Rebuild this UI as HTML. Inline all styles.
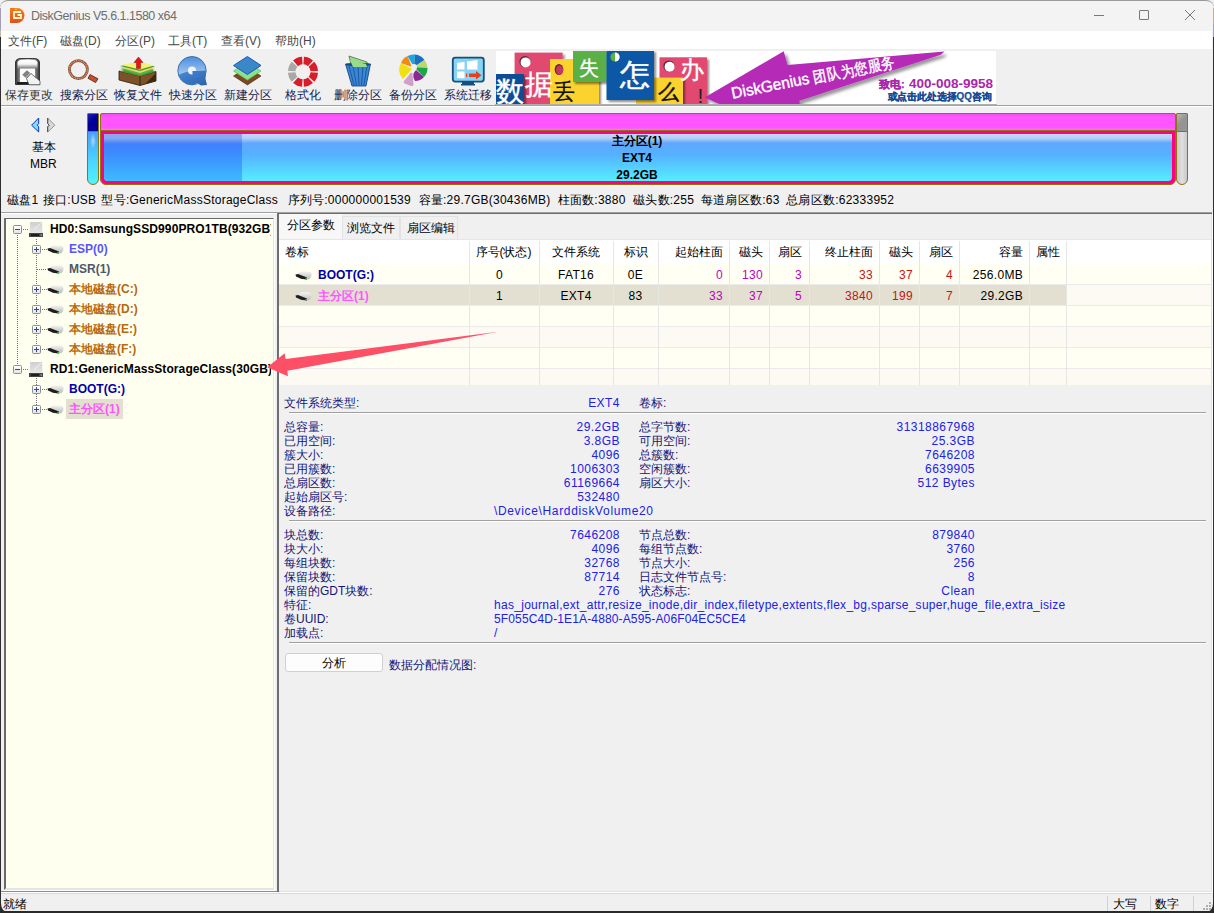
<!DOCTYPE html>
<html><head><meta charset="utf-8">
<style>
*{margin:0;padding:0;box-sizing:border-box}
html,body{width:1214px;height:913px;overflow:hidden;background:#f0f0f0;font-family:"Liberation Sans",sans-serif;font-size:12px;color:#000;position:relative}
.a{position:absolute;white-space:nowrap;line-height:14px}
.ab{position:absolute}
svg{position:absolute;overflow:visible}
</style></head><body>
<!-- window frame -->
<div class="ab" style="left:0;top:0;width:1214px;height:913px;background:#f0f0f0"></div>
<!-- title bar -->
<div class="ab" style="left:0;top:0;width:1214px;height:31px;background:#f3f3f3;border-top:1px solid #9a9a9a;border-radius:8px 8px 0 0"></div>
<svg style="left:10px;top:7px" width="15" height="16" viewBox="0 0 15 16">
<defs><linearGradient id="lg" x1="0" y1="0" x2="0" y2="1"><stop offset="0" stop-color="#f77b1a"/><stop offset="1" stop-color="#e2501a"/></linearGradient></defs>
<path d="M0 1 H7 A7.5 7.5 0 0 1 7 16 H0 Z" fill="url(#lg)"/>
<path d="M11 5 H4 V11 H11 V8 H7.5" fill="none" stroke="#fff6c8" stroke-width="1.8"/>
<circle cx="6" cy="2.3" r="0.9" fill="#ffd23a"/>
</svg>
<div class="a" id="title" style="left:31px;top:9px;color:#6e6e6e;font-size:12.5px;letter-spacing:-0.5px">DiskGenius V5.6.1.1580 x64</div>
<!-- window controls -->
<div class="ab" style="left:1094px;top:15px;width:10px;height:1px;background:#777"></div>
<div class="ab" style="left:1139px;top:10px;width:10px;height:10px;border:1px solid #777;border-radius:1px"></div>
<svg style="left:1185px;top:10px" width="10" height="10"><path d="M0 0 L10 10 M10 0 L0 10" stroke="#777" stroke-width="1"/></svg>
<!-- menu bar -->
<div class="ab" style="left:1px;top:31px;width:1211px;height:18px;background:#fff"></div>
<div class="a" style="left:8px;top:34px;color:#484848">文件(F)</div>
<div class="a" style="left:60px;top:34px;color:#484848">磁盘(D)</div>
<div class="a" style="left:115px;top:34px;color:#484848">分区(P)</div>
<div class="a" style="left:168px;top:34px;color:#484848">工具(T)</div>
<div class="a" style="left:221px;top:34px;color:#484848">查看(V)</div>
<div class="a" style="left:275px;top:34px;color:#484848">帮助(H)</div>

<!-- toolbar -->

<svg style="left:0;top:0" width="500" height="100" viewBox="0 0 500 100">
<defs>
<linearGradient id="svh" x1="0" y1="0" x2="1" y2="0"><stop offset="0" stop-color="#333"/><stop offset="0.18" stop-color="#8a8a8a"/><stop offset="0.5" stop-color="#d0d0d0"/><stop offset="0.82" stop-color="#8a8a8a"/><stop offset="1" stop-color="#333"/></linearGradient>
<linearGradient id="svt" x1="0" y1="0" x2="0" y2="1"><stop offset="0" stop-color="#fff"/><stop offset="0.45" stop-color="#f4f4f4"/><stop offset="1" stop-color="#6a6a6a"/></linearGradient>
<linearGradient id="qtop" x1="0" y1="0" x2="0" y2="1"><stop offset="0" stop-color="#4a8ee0"/><stop offset="0.75" stop-color="#b4d0f0"/><stop offset="1" stop-color="#dce8f6"/></linearGradient>
<linearGradient id="qbot" x1="0" y1="0" x2="1" y2="1"><stop offset="0" stop-color="#4a8ad8"/><stop offset="1" stop-color="#2a62a8"/></linearGradient>
</defs>
<!-- save -->
<g transform="translate(15,58)">
<path d="M0.5 4 Q1 0.8 5 0.5 H20 Q24 0.8 24.5 4 V26.5 H0.5 Z" fill="url(#svh)" stroke="#2a2a2a" stroke-width="0.9"/>
<path d="M2.5 4.5 Q3 2 6 2 H19 Q22 2 22.5 4.5 V11 H2.5 Z" fill="url(#svt)"/>
<rect x="5" y="10.5" width="15" height="13.5" fill="#fbfbfb"/>
<rect x="2" y="24" width="21" height="2.3" fill="#1e1e1e"/>
<path d="M7.3 16.8 L11.8 12.2 L15 14.7 L10.5 19.7 Z" fill="#808080"/>
<path d="M10.5 19.7 L15 14.7 L16 15.5 L11.5 20.6 Z" fill="#a8a8a8"/>
<path d="M11.5 20.6 L16 15.5 L25 23 L25 26.8 L14 26.8 Z" fill="#f2f2f2" stroke="#3a3a3a" stroke-width="0.7"/>
</g>
<!-- magnifier -->
<circle cx="78.4" cy="69.6" r="9" fill="none" stroke="#6a4a3a" stroke-width="2.8"/>
<circle cx="78.4" cy="69.6" r="9" fill="none" stroke="#ec8a5a" stroke-width="1.8" stroke-dasharray="1.2 0.6"/>
<path d="M90 74.5 L98 78.8 L95.6 82.6 L88 78.3 Z" fill="#c4502e" stroke="#5a1e10" stroke-width="0.8"/>
<!-- recover -->
<path d="M119 71 L140 76 L156 71.5 L156 81 L140 85.5 L119 80 Z" fill="#7d5228" stroke="#2a1808" stroke-width="0.8"/>
<path d="M140 76 L140 85.5" stroke="#2a1808" stroke-width="0.8"/>
<path d="M145 84 L156 73 L156 81 Z" fill="#3e2810"/>
<path d="M119.5 71.2 L139 66.5 L156 71.5 L140 76.3 Z" fill="#3e9a3a"/>
<path d="M120 69 L139 65 L155 70 L140 75 Z" fill="#5ab04a"/>
<path d="M120 67.5 L139 64 L155 68 L140 73 Z" fill="#e8d860"/>
<path d="M120 66 L139 62 L155 66.5 L140 71 Z" fill="#4a9a3a"/>
<path d="M121 65 L139 61.5 L154 65.5 L140 69.5 Z" fill="#f5f07a"/>
<path d="M136.5 68.5 L136.5 62.5 L134 62.5 L138.5 57 L143 62.5 L140.5 62.5 L140.5 68.5 Z" fill="#e8141a" stroke="#8a0a0a" stroke-width="0.5"/>
<!-- quick Q -->
<circle cx="192" cy="70.7" r="14.2" fill="url(#qtop)" stroke="#2a5a98" stroke-width="0.8"/>
<path d="M178.3 75 Q186 71 192 71.5 L206 70.5 L205.5 79 L207 85 L201 85.5 L197 83 Q194 85 192 85 A14.2 14.2 0 0 1 178.3 75 Z" fill="url(#qbot)"/>
<circle cx="192" cy="70.5" r="4" fill="#f0f4f8"/>
<rect x="192.5" y="71" width="6" height="6" fill="#3a7ac8"/>
<!-- new partition -->
<path d="M233.5 76 L247.4 67 L261 76 L247.4 85 Z" fill="#7a4a22" stroke="#4a2a10" stroke-width="0.6"/>
<path d="M233.5 71 L247.4 62 L261 71 L247.4 80 Z" fill="#8ee08e" stroke="#5ac85a" stroke-width="0.8"/>
<path d="M233.5 65.5 L247.4 56.5 L261 65.5 L247.4 74.5 Z" fill="#3a88c8" stroke="#1a5ab8" stroke-width="1"/>
<!-- format -->
<g transform="translate(303,71.8)">
<path d="M0.92 -14.97 A15 15 0 0 1 9.94 -11.23 L4.97 -5.62 A7.5 7.5 0 0 0 0.46 -7.49 Z" fill="#d81e2a"/>
<path d="M11.23 -9.94 A15 15 0 0 1 14.97 -0.92 L7.49 -0.46 A7.5 7.5 0 0 0 5.62 -4.97 Z" fill="#d81e2a"/>
<path d="M14.97 0.92 A15 15 0 0 1 11.23 9.94 L5.62 4.97 A7.5 7.5 0 0 0 7.49 0.46 Z" fill="#d81e2a"/>
<path d="M9.94 11.23 A15 15 0 0 1 0.92 14.97 L0.46 7.49 A7.5 7.5 0 0 0 4.97 5.62 Z" fill="#d81e2a"/>
<path d="M-0.92 14.97 A15 15 0 0 1 -9.94 11.23 L-4.97 5.62 A7.5 7.5 0 0 0 -0.46 7.49 Z" fill="#d81e2a"/>
<path d="M-11.23 9.94 A15 15 0 0 1 -14.97 0.92 L-7.49 0.46 A7.5 7.5 0 0 0 -5.62 4.97 Z" fill="#a8a8a8"/>
<path d="M-14.97 -0.92 A15 15 0 0 1 -11.23 -9.94 L-5.62 -4.97 A7.5 7.5 0 0 0 -7.49 -0.46 Z" fill="#a8a8a8"/>
<path d="M-9.94 -11.23 A15 15 0 0 1 -0.92 -14.97 L-0.46 -7.49 A7.5 7.5 0 0 0 -4.97 -5.62 Z" fill="#d81e2a"/>
</g>

<!-- trash -->
<path d="M349 56 L367 62 L368 68 L352 69 Z" fill="#98dc88" stroke="#2a4a2a" stroke-width="0.6"/>
<path d="M345.5 64 L370.5 64 L366 86 L352 86 Z" fill="#3a86d0" stroke="#0a3a78" stroke-width="0.8"/>
<path d="M349 66 L354 85 M353 66 L356.5 85 M358 66 L359 85 M363 66 L361.5 85 M367 66 L364 85" stroke="#1e5aa8" stroke-width="1"/>
<ellipse cx="358" cy="64.5" rx="12.5" ry="1.8" fill="#1a4a88"/>
<path d="M350 60 L366 64 L367 67 L353 67 Z" fill="#98dc88"/>
<!-- backup wheel -->
<g transform="translate(414,67)">
<path d="M0 0 L-6.5 -11 A13 13 0 0 1 1 -12.5 Z" fill="#16a8e0"/>
<path d="M0 0 L1 -12.5 A13 13 0 0 1 10.5 -7 Z" fill="#1a70c0"/>
<path d="M0 0 L10.5 -7 A13 13 0 0 1 13.5 1 Z" fill="#b8d870"/>
<path d="M0 0 L13.5 1 A13 13 0 0 1 10 10 Z" fill="#18a848"/>
<path d="M2 3 L10 10 A12 12 0 0 1 1 14 Q-3 8 2 3 Z" fill="#8a2a90"/>
<path d="M-3.5 6 Q-2 5 -1.5 7 L-0.5 18 Q-1 19.5 -3 19 L-9.5 16.5 Q-11 15.5 -10 14 Z" fill="#d0a0cc"/>
<path d="M-2 2 L-11 12 A13 13 0 0 1 -13 -4 Z" fill="#f0e010"/>
<path d="M-2 0 L-13 -4 A13 13 0 0 1 -6.5 -11 Z" fill="#f08a18"/>
<circle cx="0" cy="0" r="3" fill="#f0f0e8"/>
</g>
<!-- monitor -->
<rect x="452.8" y="57.6" width="31" height="24" rx="2.5" fill="#88d4f4" stroke="#13507e" stroke-width="1.8"/>
<rect x="462" y="82" width="12" height="2.5" fill="#13507e"/>
<rect x="461" y="84" width="14" height="1.5" fill="#13507e"/>
<path d="M457 62.8 L464.5 62 L464.5 69.5 L457 69.5 Z" fill="#fff"/>
<path d="M467 61.5 L477.5 60 L477.5 69.5 L467 69.5 Z" fill="#fff"/>
<path d="M457 71.5 L464.5 71.5 L464.5 78.5 L457 78 Z" fill="#fff"/>
<path d="M469 73.5 L476 73.5 L476 71 L481.5 75.2 L476 79.5 L476 77 L469 77 Z" fill="#e8401a"/>
<rect x="466" y="73.5" width="1.2" height="3.5" fill="#e8401a"/>
</svg>
<div class="a" style="left:5px;top:88px;color:#333">保存更改</div>
<div class="a" style="left:60px;top:88px;color:#14224e">搜索分区</div>
<div class="a" style="left:114px;top:88px;color:#14224e">恢复文件</div>
<div class="a" style="left:169px;top:88px;color:#14224e">快速分区</div>
<div class="a" style="left:224px;top:88px;color:#14224e">新建分区</div>
<div class="a" style="left:285px;top:88px;color:#14224e">格式化</div>
<div class="a" style="left:334px;top:88px;color:#14224e">删除分区</div>
<div class="a" style="left:389px;top:88px;color:#14224e">备份分区</div>
<div class="a" style="left:444px;top:88px;color:#14224e">系统迁移</div>

<div class="ab" style="left:1px;top:105px;width:1211px;height:1px;background:#a0a0a0"></div>
<div class="ab" style="left:1px;top:106px;width:1211px;height:1px;background:#fff"></div>
<!-- banner -->

<div class="ab" style="left:496px;top:51px;width:500px;height:54px;background:#fff;overflow:hidden">
<svg style="left:0;top:0" width="500" height="54" viewBox="0 0 500 54">
<defs>
<filter id="sh" x="-20%" y="-20%" width="150%" height="150%"><feDropShadow dx="2" dy="2" stdDeviation="1.2" flood-color="#000" flood-opacity="0.45"/></filter>
<filter id="sh2" x="-20%" y="-20%" width="150%" height="150%"><feDropShadow dx="3" dy="3" stdDeviation="1.5" flood-color="#000" flood-opacity="0.4"/></filter>
</defs>
<g filter="url(#sh)">
<rect x="18.6" y="1.6" width="48" height="54" fill="#e24a70"/>
</g>
<circle cx="29" cy="10.7" r="5.6" fill="#5a2a3a"/><circle cx="29.6" cy="11.4" r="5" fill="#fff"/>
<g filter="url(#sh)"><rect x="54" y="8" width="49" height="48" fill="#fcd22e"/></g>
<ellipse cx="63" cy="18.5" rx="4.3" ry="5.6" fill="#7a1a3a"/><ellipse cx="63.6" cy="19.2" rx="3.6" ry="4.8" fill="#c03a5a"/>
<g filter="url(#sh)"><rect x="77" y="-1" width="33.5" height="32" fill="#5aaf46"/></g>
<g filter="url(#sh)"><rect x="163.5" y="6.3" width="47.5" height="50" fill="#e24a70"/></g>
<circle cx="173" cy="15" r="5.6" fill="#5a2a3a"/><circle cx="173.6" cy="15.7" r="5" fill="#fff"/>
<g filter="url(#sh)"><rect x="140" y="26.6" width="47" height="30" fill="#fcd22e"/></g>
<g filter="url(#sh)"><rect x="110.5" y="-1" width="47.5" height="50" fill="#0c59a6"/></g>
<circle cx="119" cy="6" r="4.6" fill="#5aaf46"/>
<path d="M119 1.4 A4.6 4.6 0 0 1 119 10.6 Z" fill="#fff"/>
<g filter="url(#sh)"><rect x="0" y="23" width="28" height="33" fill="#0b4d98"/></g>
<g font-family="Liberation Sans, sans-serif">
<text x="-0.5" y="50" font-size="28" fill="#fff" stroke="#fff" stroke-width="0.4">数</text>
<text x="29" y="43" font-size="28" fill="#fff" stroke="#fff" stroke-width="0.4">据</text>
<text x="56.5" y="48" font-size="22" fill="#111" stroke="#111" stroke-width="0.3">丢</text>
<text x="83" y="24" font-size="20" fill="#fff" stroke="#fff" stroke-width="0.3">失</text>
<text x="124" y="33.5" font-size="30" fill="#fff" stroke="#fff" stroke-width="0.5">怎</text>
<text x="161.5" y="48" font-size="21" fill="#111" stroke="#111" stroke-width="0.4">么</text>
<text x="184" y="27" font-size="24" fill="#fff" stroke="#fff" stroke-width="0.4">办</text>
<text x="201.5" y="52" font-size="21" fill="#222">!</text>
</g>
<g filter="url(#sh2)">
<path d="M208.6 46.4 L287.7 0.3 L291.6 14.1 L448.5 0.5 L444.8 3.8 L303.5 49.7 L304 56 L230 56 Z" fill="#b62ab8"/>
</g>
<g transform="translate(237.4,47.6) rotate(-11.2)" font-family="Liberation Sans, sans-serif" fill="#fff" stroke="#fff" stroke-width="0.4">
<text x="-0.8" y="0" font-size="16" textLength="79" lengthAdjust="spacingAndGlyphs">DiskGenius</text>
<text x="82.5" y="0.5" font-size="15.5" textLength="83" lengthAdjust="spacingAndGlyphs">团队为您服务</text>
</g>
<text x="383" y="37.2" font-family="Liberation Sans, sans-serif" font-size="11" font-weight="bold" fill="#a826a8" stroke="#a826a8" stroke-width="0.25">致电:</text>
<text x="413" y="37.2" font-family="Liberation Sans, sans-serif" font-size="13.5" font-weight="bold" fill="#a826a8">400-008-9958</text>
<text x="391.5" y="49" font-family="Liberation Sans, sans-serif" font-size="10" font-weight="bold" fill="#174a96" stroke="#174a96" stroke-width="0.25" textLength="104" lengthAdjust="spacingAndGlyphs">或点击此处选择QQ咨询</text>
</svg>
</div>
<div class="ab" style="left:495px;top:104px;width:502px;height:1px;background:#b0b0b0"></div>

<!-- diskmap -->

<svg style="left:30px;top:116px" width="28" height="18" viewBox="0 0 28 18">
<path d="M1.6 9.2 L8.7 2 L8.7 7.6 L7.3 9.2 L8.7 10.8 L8.7 16 Z" fill="#7cdcff" stroke="#0a36b0" stroke-width="1" stroke-linejoin="miter"/>
<path d="M17.7 2 L24.8 9.2 L17.7 16 L17.7 10.8 L19.3 9.2 L17.7 7.6 Z" fill="#dadada" stroke="#8a8a8a" stroke-width="0.9"/>
<path d="M17.7 2 L17.7 7.6 L19.3 9.2 L17.7 10.8 L17.7 16" fill="none" stroke="#4a4a4a" stroke-width="1"/>
</svg>
<div class="a" style="left:32px;top:140px;color:#000">基本</div>
<div class="a" style="left:30px;top:157px;color:#000">MBR</div>
<!-- small bar -->
<div class="ab" style="left:87px;top:113px;width:12px;height:72px;border:1px solid #8c7414;border-radius:1px 1px 6px 6px;overflow:hidden;background:linear-gradient(#4a7ef8,#4ad8ff 70%,#50f4ff)">
 <div class="ab" style="left:0;top:0;width:10px;height:17px;background:linear-gradient(135deg,#2020b8,#000098 40%)"></div>
 <div class="ab" style="left:0;top:17px;width:10px;height:1px;background:#8c7414"></div>
 <div class="ab" style="left:2px;top:19px;width:6px;height:16px;border-radius:3px;background:radial-gradient(ellipse at center,rgba(255,255,255,0.55),rgba(255,255,255,0) 70%)"></div>
</div>
<!-- main bar -->
<div class="ab" style="left:100px;top:113px;width:1076px;height:72px;border:1px solid #8c7414;border-radius:2px 2px 6px 6px;overflow:hidden;background:#ff0080">
 <div class="ab" style="left:0;top:0;width:1074px;height:16px;background:linear-gradient(#f050f0,#ff55ff 20%,#ff55ff 85%,#ff70ff)"></div>
 <div class="ab" style="left:0;top:16px;width:1074px;height:1px;background:#8c7414"></div>
 <div class="ab" style="left:3px;top:20px;width:1068px;height:47px;border-radius:0 0 4px 4px;overflow:hidden;background:linear-gradient(#c0d6f8 0px,#b8d0f8 4px,#60a8ff 9px,#55b0ff 20px,#55eeff 47px)">
  <div class="ab" style="left:0;top:0;width:138px;height:47px;background:linear-gradient(#88a8f0 0px,#88a8f0 4px,#4080ff 10px,#3c8cff 20px,#3cbcff 47px)"></div>
 </div>
</div>
<div class="a" style="left:537px;top:134px;width:200px;text-align:center;font-weight:bold;color:#000">主分区(1)</div>
<div class="a" style="left:537px;top:151px;width:200px;text-align:center;font-weight:bold;color:#000">EXT4</div>
<div class="a" style="left:537px;top:168px;width:200px;text-align:center;font-weight:bold;color:#000">29.2GB</div>
<!-- scroller -->
<div class="ab" style="left:1176px;top:113px;width:12px;height:72px;border:1px solid #8c7414;border-radius:1px 1px 6px 6px;overflow:hidden;background:linear-gradient(90deg,#c8c8c8,#e0e0e0 50%,#c8c8c8)">
 <div class="ab" style="left:0;top:0;width:10px;height:17px;background:linear-gradient(135deg,#b8b8b8,#949494 45%)"></div>
 <div class="ab" style="left:0;top:17px;width:10px;height:1px;background:#8c7414"></div>
</div>

<div class="a" style="left:7.0px;top:193px;color:#000;letter-spacing:0.25px">磁盘1</div>
<div class="a" style="left:42.8px;top:193px;color:#000;letter-spacing:0.25px">接口:USB</div>
<div class="a" style="left:101.4px;top:193px;color:#000;letter-spacing:0.25px">型号:GenericMassStorageClass</div>
<div class="a" style="left:287.5px;top:193px;color:#000;letter-spacing:0.25px">序列号:000000001539</div>
<div class="a" style="left:418.5px;top:193px;color:#000;letter-spacing:0.25px">容量:29.7GB(30436MB)</div>
<div class="a" style="left:557.6px;top:193px;color:#000;letter-spacing:0.25px">柱面数:3880</div>
<div class="a" style="left:633.0px;top:193px;color:#000;letter-spacing:0.25px">磁头数:255</div>
<div class="a" style="left:700.9px;top:193px;color:#000;letter-spacing:0.25px">每道扇区数:63</div>
<div class="a" style="left:786.2px;top:193px;color:#000;letter-spacing:0.25px">总扇区数:62333952</div>
<div class="ab" style="left:1px;top:212px;width:1211px;height:1px;background:#a0a0a0"></div>
<div class="ab" style="left:1px;top:213px;width:1211px;height:1px;background:#fff"></div>
<!-- tree -->
<div class="ab" style="left:1px;top:214px;width:276px;height:678px;background:#f0f0f0"></div>
<div class="ab" style="left:4px;top:218px;width:270px;height:672px;border-top:1px solid #6a6a6a;border-left:2px solid #6a6a6a;border-right:1px solid #e4e4e4;border-bottom:2px solid #e4e4e4;background:#fffff0"></div>
<div class="ab" style="left:274px;top:218px;width:1px;height:672px;background:#fff"></div>
<div class="ab" style="left:4px;top:890px;width:271px;height:1px;background:#fff"></div>
<div class="ab" style="left:1px;top:891px;width:277px;height:1px;background:#8a8a8a"></div>
<div class="ab" style="left:1px;top:892px;width:277px;height:1px;background:#fff"></div>
<div class="ab" style="left:17px;top:235px;width:1px;height:130px;background:repeating-linear-gradient(#707070 0 1px,transparent 1px 2px)"></div>
<div class="ab" style="left:36px;top:239px;width:1px;height:110px;background:repeating-linear-gradient(#707070 0 1px,transparent 1px 2px)"></div>
<div class="ab" style="left:36px;top:378px;width:1px;height:31px;background:repeating-linear-gradient(#707070 0 1px,transparent 1px 2px)"></div>
<div class="ab" style="left:66px;top:399px;width:57px;height:20px;background:#e3e0d0"></div>
<div class="ab" style="left:13px;top:225px;width:9px;height:9px;border:1px solid #8e8e8e;border-radius:1.5px;background:linear-gradient(#fff,#e4e4e4)"></div><div class="ab" style="left:15px;top:229px;width:5px;height:1px;background:#2a4aa0"></div>
<div class="ab" style="left:23px;top:229px;width:6px;height:1px;background:repeating-linear-gradient(90deg,#707070 0 1px,transparent 1px 2px)"></div>
<svg style="left:29px;top:222px" width="15" height="15" viewBox="0 0 15 15"><defs><linearGradient id="hg0" x1="0" y1="0" x2="0" y2="1"><stop offset="0" stop-color="#cfcfcf"/><stop offset="1" stop-color="#e6e6e6"/></linearGradient></defs><path d="M1.2 0 H13 L13.6 11 H0.6 Z" fill="url(#hg0)"/><path d="M5 8 L12 1" stroke="#e8e8e8" stroke-width="1.2"/><rect x="0" y="11" width="14" height="4" fill="#454545"/><rect x="2" y="12" width="8" height="2" fill="#1e1e1e"/><rect x="11.5" y="12.3" width="1.5" height="1.5" fill="#5ac85a"/></svg>
<div class="a" style="left:50px;top:222px;font-weight:bold;color:#000;width:221px;overflow:hidden;letter-spacing:0.1px">HD0:SamsungSSD990PRO1TB(932GB)</div>
<div class="ab" style="left:32px;top:245px;width:9px;height:9px;border:1px solid #8e8e8e;border-radius:1.5px;background:linear-gradient(#fff,#e4e4e4)"></div><div class="ab" style="left:34px;top:249px;width:5px;height:1px;background:#2a4aa0"></div><div class="ab" style="left:36px;top:247px;width:1px;height:5px;background:#2a4aa0"></div>
<div class="ab" style="left:42px;top:249px;width:5px;height:1px;background:repeating-linear-gradient(90deg,#707070 0 1px,transparent 1px 2px)"></div>
<svg style="left:47px;top:245px" width="17" height="9" viewBox="0 0 17 9"><defs><linearGradient id="tdg1" x1="0" y1="0" x2="0" y2="1"><stop offset="0" stop-color="#f4f4f4"/><stop offset="1" stop-color="#b8b8b8"/></linearGradient></defs><path d="M3 3 Q4 0.5 8 0.3 L14 0.5 Q16.5 1 16.5 3.5 L16 6 Q15 8.5 12 8.5 L6 8 Z" fill="url(#tdg1)"/><path d="M0.5 3.5 L3 3 L12 6.5 L12 8.5 L6 7.8 L1 5.5 Z" fill="#1e1e1e"/><rect x="10.5" y="6.8" width="1.5" height="1.2" fill="#3ac83a"/></svg>
<div class="a" style="left:69px;top:242px;font-weight:bold;color:#5555ff">ESP(0)</div>
<div class="ab" style="left:37px;top:269px;width:10px;height:1px;background:repeating-linear-gradient(90deg,#707070 0 1px,transparent 1px 2px)"></div>
<svg style="left:47px;top:265px" width="17" height="9" viewBox="0 0 17 9"><defs><linearGradient id="tdg2" x1="0" y1="0" x2="0" y2="1"><stop offset="0" stop-color="#f4f4f4"/><stop offset="1" stop-color="#b8b8b8"/></linearGradient></defs><path d="M3 3 Q4 0.5 8 0.3 L14 0.5 Q16.5 1 16.5 3.5 L16 6 Q15 8.5 12 8.5 L6 8 Z" fill="url(#tdg2)"/><path d="M0.5 3.5 L3 3 L12 6.5 L12 8.5 L6 7.8 L1 5.5 Z" fill="#1e1e1e"/><rect x="10.5" y="6.8" width="1.5" height="1.2" fill="#3ac83a"/></svg>
<div class="a" style="left:69px;top:262px;font-weight:bold;color:#4e5868">MSR(1)</div>
<div class="ab" style="left:32px;top:285px;width:9px;height:9px;border:1px solid #8e8e8e;border-radius:1.5px;background:linear-gradient(#fff,#e4e4e4)"></div><div class="ab" style="left:34px;top:289px;width:5px;height:1px;background:#2a4aa0"></div><div class="ab" style="left:36px;top:287px;width:1px;height:5px;background:#2a4aa0"></div>
<div class="ab" style="left:42px;top:289px;width:5px;height:1px;background:repeating-linear-gradient(90deg,#707070 0 1px,transparent 1px 2px)"></div>
<svg style="left:47px;top:285px" width="17" height="9" viewBox="0 0 17 9"><defs><linearGradient id="tdg3" x1="0" y1="0" x2="0" y2="1"><stop offset="0" stop-color="#f4f4f4"/><stop offset="1" stop-color="#b8b8b8"/></linearGradient></defs><path d="M3 3 Q4 0.5 8 0.3 L14 0.5 Q16.5 1 16.5 3.5 L16 6 Q15 8.5 12 8.5 L6 8 Z" fill="url(#tdg3)"/><path d="M0.5 3.5 L3 3 L12 6.5 L12 8.5 L6 7.8 L1 5.5 Z" fill="#1e1e1e"/><rect x="10.5" y="6.8" width="1.5" height="1.2" fill="#3ac83a"/></svg>
<div class="a" style="left:69px;top:282px;font-weight:bold;color:#b8680e">本地磁盘(C:)</div>
<div class="ab" style="left:32px;top:305px;width:9px;height:9px;border:1px solid #8e8e8e;border-radius:1.5px;background:linear-gradient(#fff,#e4e4e4)"></div><div class="ab" style="left:34px;top:309px;width:5px;height:1px;background:#2a4aa0"></div><div class="ab" style="left:36px;top:307px;width:1px;height:5px;background:#2a4aa0"></div>
<div class="ab" style="left:42px;top:309px;width:5px;height:1px;background:repeating-linear-gradient(90deg,#707070 0 1px,transparent 1px 2px)"></div>
<svg style="left:47px;top:305px" width="17" height="9" viewBox="0 0 17 9"><defs><linearGradient id="tdg4" x1="0" y1="0" x2="0" y2="1"><stop offset="0" stop-color="#f4f4f4"/><stop offset="1" stop-color="#b8b8b8"/></linearGradient></defs><path d="M3 3 Q4 0.5 8 0.3 L14 0.5 Q16.5 1 16.5 3.5 L16 6 Q15 8.5 12 8.5 L6 8 Z" fill="url(#tdg4)"/><path d="M0.5 3.5 L3 3 L12 6.5 L12 8.5 L6 7.8 L1 5.5 Z" fill="#1e1e1e"/><rect x="10.5" y="6.8" width="1.5" height="1.2" fill="#3ac83a"/></svg>
<div class="a" style="left:69px;top:302px;font-weight:bold;color:#b8680e">本地磁盘(D:)</div>
<div class="ab" style="left:32px;top:325px;width:9px;height:9px;border:1px solid #8e8e8e;border-radius:1.5px;background:linear-gradient(#fff,#e4e4e4)"></div><div class="ab" style="left:34px;top:329px;width:5px;height:1px;background:#2a4aa0"></div><div class="ab" style="left:36px;top:327px;width:1px;height:5px;background:#2a4aa0"></div>
<div class="ab" style="left:42px;top:329px;width:5px;height:1px;background:repeating-linear-gradient(90deg,#707070 0 1px,transparent 1px 2px)"></div>
<svg style="left:47px;top:325px" width="17" height="9" viewBox="0 0 17 9"><defs><linearGradient id="tdg5" x1="0" y1="0" x2="0" y2="1"><stop offset="0" stop-color="#f4f4f4"/><stop offset="1" stop-color="#b8b8b8"/></linearGradient></defs><path d="M3 3 Q4 0.5 8 0.3 L14 0.5 Q16.5 1 16.5 3.5 L16 6 Q15 8.5 12 8.5 L6 8 Z" fill="url(#tdg5)"/><path d="M0.5 3.5 L3 3 L12 6.5 L12 8.5 L6 7.8 L1 5.5 Z" fill="#1e1e1e"/><rect x="10.5" y="6.8" width="1.5" height="1.2" fill="#3ac83a"/></svg>
<div class="a" style="left:69px;top:322px;font-weight:bold;color:#b8680e">本地磁盘(E:)</div>
<div class="ab" style="left:32px;top:345px;width:9px;height:9px;border:1px solid #8e8e8e;border-radius:1.5px;background:linear-gradient(#fff,#e4e4e4)"></div><div class="ab" style="left:34px;top:349px;width:5px;height:1px;background:#2a4aa0"></div><div class="ab" style="left:36px;top:347px;width:1px;height:5px;background:#2a4aa0"></div>
<div class="ab" style="left:42px;top:349px;width:5px;height:1px;background:repeating-linear-gradient(90deg,#707070 0 1px,transparent 1px 2px)"></div>
<svg style="left:47px;top:345px" width="17" height="9" viewBox="0 0 17 9"><defs><linearGradient id="tdg6" x1="0" y1="0" x2="0" y2="1"><stop offset="0" stop-color="#f4f4f4"/><stop offset="1" stop-color="#b8b8b8"/></linearGradient></defs><path d="M3 3 Q4 0.5 8 0.3 L14 0.5 Q16.5 1 16.5 3.5 L16 6 Q15 8.5 12 8.5 L6 8 Z" fill="url(#tdg6)"/><path d="M0.5 3.5 L3 3 L12 6.5 L12 8.5 L6 7.8 L1 5.5 Z" fill="#1e1e1e"/><rect x="10.5" y="6.8" width="1.5" height="1.2" fill="#3ac83a"/></svg>
<div class="a" style="left:69px;top:342px;font-weight:bold;color:#b8680e">本地磁盘(F:)</div>
<div class="ab" style="left:13px;top:365px;width:9px;height:9px;border:1px solid #8e8e8e;border-radius:1.5px;background:linear-gradient(#fff,#e4e4e4)"></div><div class="ab" style="left:15px;top:369px;width:5px;height:1px;background:#2a4aa0"></div>
<div class="ab" style="left:23px;top:369px;width:6px;height:1px;background:repeating-linear-gradient(90deg,#707070 0 1px,transparent 1px 2px)"></div>
<svg style="left:29px;top:362px" width="15" height="15" viewBox="0 0 15 15"><defs><linearGradient id="hg7" x1="0" y1="0" x2="0" y2="1"><stop offset="0" stop-color="#cfcfcf"/><stop offset="1" stop-color="#e6e6e6"/></linearGradient></defs><path d="M1.2 0 H13 L13.6 11 H0.6 Z" fill="url(#hg7)"/><path d="M5 8 L12 1" stroke="#e8e8e8" stroke-width="1.2"/><rect x="0" y="11" width="14" height="4" fill="#454545"/><rect x="2" y="12" width="8" height="2" fill="#1e1e1e"/><rect x="11.5" y="12.3" width="1.5" height="1.5" fill="#5ac85a"/></svg>
<div class="a" style="left:50px;top:362px;font-weight:bold;color:#000;width:221px;overflow:hidden;letter-spacing:0.1px">RD1:GenericMassStorageClass(30GB)</div>
<div class="ab" style="left:32px;top:385px;width:9px;height:9px;border:1px solid #8e8e8e;border-radius:1.5px;background:linear-gradient(#fff,#e4e4e4)"></div><div class="ab" style="left:34px;top:389px;width:5px;height:1px;background:#2a4aa0"></div><div class="ab" style="left:36px;top:387px;width:1px;height:5px;background:#2a4aa0"></div>
<div class="ab" style="left:42px;top:389px;width:5px;height:1px;background:repeating-linear-gradient(90deg,#707070 0 1px,transparent 1px 2px)"></div>
<svg style="left:47px;top:385px" width="17" height="9" viewBox="0 0 17 9"><defs><linearGradient id="tdg8" x1="0" y1="0" x2="0" y2="1"><stop offset="0" stop-color="#f4f4f4"/><stop offset="1" stop-color="#b8b8b8"/></linearGradient></defs><path d="M3 3 Q4 0.5 8 0.3 L14 0.5 Q16.5 1 16.5 3.5 L16 6 Q15 8.5 12 8.5 L6 8 Z" fill="url(#tdg8)"/><path d="M0.5 3.5 L3 3 L12 6.5 L12 8.5 L6 7.8 L1 5.5 Z" fill="#1e1e1e"/><rect x="10.5" y="6.8" width="1.5" height="1.2" fill="#3ac83a"/></svg>
<div class="a" style="left:69px;top:382px;font-weight:bold;color:#0000a8">BOOT(G:)</div>
<div class="ab" style="left:32px;top:405px;width:9px;height:9px;border:1px solid #8e8e8e;border-radius:1.5px;background:linear-gradient(#fff,#e4e4e4)"></div><div class="ab" style="left:34px;top:409px;width:5px;height:1px;background:#2a4aa0"></div><div class="ab" style="left:36px;top:407px;width:1px;height:5px;background:#2a4aa0"></div>
<div class="ab" style="left:42px;top:409px;width:5px;height:1px;background:repeating-linear-gradient(90deg,#707070 0 1px,transparent 1px 2px)"></div>
<svg style="left:47px;top:405px" width="17" height="9" viewBox="0 0 17 9"><defs><linearGradient id="tdg9" x1="0" y1="0" x2="0" y2="1"><stop offset="0" stop-color="#f4f4f4"/><stop offset="1" stop-color="#b8b8b8"/></linearGradient></defs><path d="M3 3 Q4 0.5 8 0.3 L14 0.5 Q16.5 1 16.5 3.5 L16 6 Q15 8.5 12 8.5 L6 8 Z" fill="url(#tdg9)"/><path d="M0.5 3.5 L3 3 L12 6.5 L12 8.5 L6 7.8 L1 5.5 Z" fill="#1e1e1e"/><rect x="10.5" y="6.8" width="1.5" height="1.2" fill="#3ac83a"/></svg>
<div class="a" style="left:69px;top:402px;font-weight:bold;color:#ff55ff">主分区(1)</div>
<!-- right -->
<div class="ab" style="left:277px;top:213px;width:935px;height:1px;background:#6e6e6e"></div>
<div class="ab" style="left:277px;top:213px;width:2px;height:679px;background:#6e6e6e"></div>
<div class="ab" style="left:279px;top:214px;width:933px;height:26px;background:#f0f0f0"></div>
<div class="ab" style="left:279px;top:214px;width:63px;height:26px;background:#f7f7f7"></div>
<div class="ab" style="left:342px;top:216px;width:58px;height:23px;border:1px solid #e2e2e2;border-bottom:none;background:#f0f0f0"></div>
<div class="ab" style="left:400px;top:216px;width:58px;height:23px;border:1px solid #e2e2e2;border-bottom:none;background:#f0f0f0"></div>
<div class="ab" style="left:279px;top:239px;width:932px;height:1px;background:#e6e6e6"></div>
<div class="a" style="left:287px;top:218px">分区参数</div>
<div class="a" style="left:347px;top:221px">浏览文件</div>
<div class="a" style="left:407px;top:221px">扇区编辑</div>
<div class="ab" style="left:279px;top:240px;width:932px;height:24px;background:#fff"></div>
<div class="ab" style="left:279px;top:264px;width:932px;height:20px;background:#fffff4"></div>
<div class="ab" style="left:279px;top:284px;width:932px;height:1px;background:#ebebeb"></div>
<div class="ab" style="left:279px;top:285px;width:932px;height:20px;background:#fdfaf4"></div>
<div class="ab" style="left:279px;top:305px;width:932px;height:1px;background:#ebebeb"></div>
<div class="ab" style="left:279px;top:306px;width:932px;height:20px;background:#fffff4"></div>
<div class="ab" style="left:279px;top:326px;width:932px;height:1px;background:#ebebeb"></div>
<div class="ab" style="left:279px;top:327px;width:932px;height:20px;background:#fdfaf4"></div>
<div class="ab" style="left:279px;top:347px;width:932px;height:1px;background:#ebebeb"></div>
<div class="ab" style="left:279px;top:348px;width:932px;height:20px;background:#fffff4"></div>
<div class="ab" style="left:279px;top:368px;width:932px;height:1px;background:#ebebeb"></div>
<div class="ab" style="left:279px;top:369px;width:932px;height:16px;background:#fdfaf4"></div>
<div class="ab" style="left:279px;top:285px;width:787px;height:20px;background:#e3e0d1"></div>
<div class="ab" style="left:469px;top:241px;width:1px;height:144px;background:#e6e6e6"></div>
<div class="ab" style="left:539px;top:241px;width:1px;height:144px;background:#e6e6e6"></div>
<div class="ab" style="left:613px;top:241px;width:1px;height:144px;background:#e6e6e6"></div>
<div class="ab" style="left:658px;top:241px;width:1px;height:144px;background:#e6e6e6"></div>
<div class="ab" style="left:729px;top:241px;width:1px;height:144px;background:#e6e6e6"></div>
<div class="ab" style="left:769px;top:241px;width:1px;height:144px;background:#e6e6e6"></div>
<div class="ab" style="left:809px;top:241px;width:1px;height:144px;background:#e6e6e6"></div>
<div class="ab" style="left:879px;top:241px;width:1px;height:144px;background:#e6e6e6"></div>
<div class="ab" style="left:919px;top:241px;width:1px;height:144px;background:#e6e6e6"></div>
<div class="ab" style="left:959px;top:241px;width:1px;height:144px;background:#e6e6e6"></div>
<div class="ab" style="left:1029px;top:241px;width:1px;height:144px;background:#e6e6e6"></div>
<div class="ab" style="left:1066px;top:241px;width:1px;height:144px;background:#e6e6e6"></div>
<div class="a" style="left:285px;top:245px;color:#000;">卷标</div>
<div class="a" style="left:403.5px;top:245px;width:200px;text-align:center;color:#000;">序号(状态)</div>
<div class="a" style="left:476px;top:245px;width:200px;text-align:center;color:#000;">文件系统</div>
<div class="a" style="left:535.5px;top:245px;width:200px;text-align:center;color:#000;">标识</div>
<div class="a" style="left:523px;top:245px;width:200px;text-align:right;color:#000;">起始柱面</div>
<div class="a" style="left:563px;top:245px;width:200px;text-align:right;color:#000;">磁头</div>
<div class="a" style="left:602px;top:245px;width:200px;text-align:right;color:#000;">扇区</div>
<div class="a" style="left:673px;top:245px;width:200px;text-align:right;color:#000;">终止柱面</div>
<div class="a" style="left:713px;top:245px;width:200px;text-align:right;color:#000;">磁头</div>
<div class="a" style="left:753px;top:245px;width:200px;text-align:right;color:#000;">扇区</div>
<div class="a" style="left:823px;top:245px;width:200px;text-align:right;color:#000;">容量</div>
<div class="a" style="left:1036px;top:245px;color:#000;">属性</div>
<div class="a" style="left:399.5px;top:268px;width:200px;text-align:center;color:#000;letter-spacing:0.3px;">0</div>
<div class="a" style="left:476px;top:268px;width:200px;text-align:center;color:#000;letter-spacing:0.3px;">FAT16</div>
<div class="a" style="left:535.5px;top:268px;width:200px;text-align:center;color:#000;letter-spacing:0.3px;">0E</div>
<div class="a" style="left:523px;top:268px;width:200px;text-align:right;color:#c000c0;letter-spacing:0.3px;">0</div>
<div class="a" style="left:563px;top:268px;width:200px;text-align:right;color:#c000c0;letter-spacing:0.3px;">130</div>
<div class="a" style="left:602px;top:268px;width:200px;text-align:right;color:#c000c0;letter-spacing:0.3px;">3</div>
<div class="a" style="left:673px;top:268px;width:200px;text-align:right;color:#c41414;letter-spacing:0.3px;">33</div>
<div class="a" style="left:713px;top:268px;width:200px;text-align:right;color:#c41414;letter-spacing:0.3px;">37</div>
<div class="a" style="left:753px;top:268px;width:200px;text-align:right;color:#c41414;letter-spacing:0.3px;">4</div>
<div class="a" style="left:823px;top:268px;width:200px;text-align:right;color:#000;letter-spacing:0.3px;">256.0MB</div>
<div class="a" style="left:399.5px;top:289px;width:200px;text-align:center;color:#000;letter-spacing:0.3px;">1</div>
<div class="a" style="left:476px;top:289px;width:200px;text-align:center;color:#000;letter-spacing:0.3px;">EXT4</div>
<div class="a" style="left:535.5px;top:289px;width:200px;text-align:center;color:#000;letter-spacing:0.3px;">83</div>
<div class="a" style="left:523px;top:289px;width:200px;text-align:right;color:#c000c0;letter-spacing:0.3px;">33</div>
<div class="a" style="left:563px;top:289px;width:200px;text-align:right;color:#c000c0;letter-spacing:0.3px;">37</div>
<div class="a" style="left:602px;top:289px;width:200px;text-align:right;color:#c000c0;letter-spacing:0.3px;">5</div>
<div class="a" style="left:673px;top:289px;width:200px;text-align:right;color:#c41414;letter-spacing:0.3px;">3840</div>
<div class="a" style="left:713px;top:289px;width:200px;text-align:right;color:#c41414;letter-spacing:0.3px;">199</div>
<div class="a" style="left:753px;top:289px;width:200px;text-align:right;color:#c41414;letter-spacing:0.3px;">7</div>
<div class="a" style="left:823px;top:289px;width:200px;text-align:right;color:#000;letter-spacing:0.3px;">29.2GB</div>
<svg style="left:295px;top:271px" width="17" height="9" viewBox="0 0 17 9"><defs><linearGradient id="rdg1" x1="0" y1="0" x2="0" y2="1"><stop offset="0" stop-color="#f4f4f4"/><stop offset="1" stop-color="#b8b8b8"/></linearGradient></defs><path d="M3 3 Q4 0.5 8 0.3 L14 0.5 Q16.5 1 16.5 3.5 L16 6 Q15 8.5 12 8.5 L6 8 Z" fill="url(#rdg1)"/><path d="M0.5 3.5 L3 3 L12 6.5 L12 8.5 L6 7.8 L1 5.5 Z" fill="#1e1e1e"/><rect x="10.5" y="6.8" width="1.5" height="1.2" fill="#3ac83a"/></svg>
<svg style="left:295px;top:292px" width="17" height="9" viewBox="0 0 17 9"><defs><linearGradient id="rdg2" x1="0" y1="0" x2="0" y2="1"><stop offset="0" stop-color="#f4f4f4"/><stop offset="1" stop-color="#b8b8b8"/></linearGradient></defs><path d="M3 3 Q4 0.5 8 0.3 L14 0.5 Q16.5 1 16.5 3.5 L16 6 Q15 8.5 12 8.5 L6 8 Z" fill="url(#rdg2)"/><path d="M0.5 3.5 L3 3 L12 6.5 L12 8.5 L6 7.8 L1 5.5 Z" fill="#1e1e1e"/><rect x="10.5" y="6.8" width="1.5" height="1.2" fill="#3ac83a"/></svg>
<div class="a" style="left:318px;top:268px;font-weight:bold;color:#0000a8">BOOT(G:)</div>
<div class="a" style="left:318px;top:289px;font-weight:bold;color:#ff55ff">主分区(1)</div>
<div class="a" style="left:284px;top:396px;color:#141478">文件系统类型:</div>
<div class="a" style="left:319.95px;top:396px;width:300px;text-align:right;color:#2020e8;letter-spacing:0.45px">EXT4</div>
<div class="a" style="left:639px;top:396px;color:#141478">卷标:</div>
<div class="ab" style="left:289px;top:412px;width:917px;height:1px;background:#a0a0a0"></div>
<div class="ab" style="left:289px;top:413px;width:917px;height:1px;background:#fff"></div>
<div class="ab" style="left:289px;top:520px;width:917px;height:1px;background:#a0a0a0"></div>
<div class="ab" style="left:289px;top:521px;width:917px;height:1px;background:#fff"></div>
<div class="ab" style="left:289px;top:642px;width:917px;height:1px;background:#a0a0a0"></div>
<div class="ab" style="left:289px;top:643px;width:917px;height:1px;background:#fff"></div>
<div class="a" style="left:284px;top:420px;color:#141478">总容量:</div>
<div class="a" style="left:319.95px;top:420px;width:300px;text-align:right;color:#2020e8;letter-spacing:0.45px">29.2GB</div>
<div class="a" style="left:639px;top:420px;color:#141478">总字节数:</div>
<div class="a" style="left:674.95px;top:420px;width:300px;text-align:right;color:#2020e8;letter-spacing:0.45px">31318867968</div>
<div class="a" style="left:284px;top:434px;color:#141478">已用空间:</div>
<div class="a" style="left:319.95px;top:434px;width:300px;text-align:right;color:#2020e8;letter-spacing:0.45px">3.8GB</div>
<div class="a" style="left:639px;top:434px;color:#141478">可用空间:</div>
<div class="a" style="left:674.95px;top:434px;width:300px;text-align:right;color:#2020e8;letter-spacing:0.45px">25.3GB</div>
<div class="a" style="left:284px;top:448px;color:#141478">簇大小:</div>
<div class="a" style="left:319.95px;top:448px;width:300px;text-align:right;color:#2020e8;letter-spacing:0.45px">4096</div>
<div class="a" style="left:639px;top:448px;color:#141478">总簇数:</div>
<div class="a" style="left:674.95px;top:448px;width:300px;text-align:right;color:#2020e8;letter-spacing:0.45px">7646208</div>
<div class="a" style="left:284px;top:462px;color:#141478">已用簇数:</div>
<div class="a" style="left:319.95px;top:462px;width:300px;text-align:right;color:#2020e8;letter-spacing:0.45px">1006303</div>
<div class="a" style="left:639px;top:462px;color:#141478">空闲簇数:</div>
<div class="a" style="left:674.95px;top:462px;width:300px;text-align:right;color:#2020e8;letter-spacing:0.45px">6639905</div>
<div class="a" style="left:284px;top:476px;color:#141478">总扇区数:</div>
<div class="a" style="left:319.95px;top:476px;width:300px;text-align:right;color:#2020e8;letter-spacing:0.45px">61169664</div>
<div class="a" style="left:639px;top:476px;color:#141478">扇区大小:</div>
<div class="a" style="left:674.95px;top:476px;width:300px;text-align:right;color:#2020e8;letter-spacing:0.45px">512 Bytes</div>
<div class="a" style="left:284px;top:490px;color:#141478">起始扇区号:</div>
<div class="a" style="left:319.95px;top:490px;width:300px;text-align:right;color:#2020e8;letter-spacing:0.45px">532480</div>
<div class="a" style="left:284px;top:504px;color:#141478">设备路径:</div>
<div class="a" style="left:494px;top:504px;color:#2020e8;letter-spacing:0.65px">\Device\HarddiskVolume20</div>
<div class="a" style="left:284px;top:528px;color:#141478">块总数:</div>
<div class="a" style="left:319.95px;top:528px;width:300px;text-align:right;color:#2020e8;letter-spacing:0.45px">7646208</div>
<div class="a" style="left:639px;top:528px;color:#141478">节点总数:</div>
<div class="a" style="left:674.95px;top:528px;width:300px;text-align:right;color:#2020e8;letter-spacing:0.45px">879840</div>
<div class="a" style="left:284px;top:542px;color:#141478">块大小:</div>
<div class="a" style="left:319.95px;top:542px;width:300px;text-align:right;color:#2020e8;letter-spacing:0.45px">4096</div>
<div class="a" style="left:639px;top:542px;color:#141478">每组节点数:</div>
<div class="a" style="left:674.95px;top:542px;width:300px;text-align:right;color:#2020e8;letter-spacing:0.45px">3760</div>
<div class="a" style="left:284px;top:556px;color:#141478">每组块数:</div>
<div class="a" style="left:319.95px;top:556px;width:300px;text-align:right;color:#2020e8;letter-spacing:0.45px">32768</div>
<div class="a" style="left:639px;top:556px;color:#141478">节点大小:</div>
<div class="a" style="left:674.95px;top:556px;width:300px;text-align:right;color:#2020e8;letter-spacing:0.45px">256</div>
<div class="a" style="left:284px;top:570px;color:#141478">保留块数:</div>
<div class="a" style="left:319.95px;top:570px;width:300px;text-align:right;color:#2020e8;letter-spacing:0.45px">87714</div>
<div class="a" style="left:639px;top:570px;color:#141478">日志文件节点号:</div>
<div class="a" style="left:674.95px;top:570px;width:300px;text-align:right;color:#2020e8;letter-spacing:0.45px">8</div>
<div class="a" style="left:284px;top:584px;color:#141478">保留的GDT块数:</div>
<div class="a" style="left:319.95px;top:584px;width:300px;text-align:right;color:#2020e8;letter-spacing:0.45px">276</div>
<div class="a" style="left:639px;top:584px;color:#141478">状态标志:</div>
<div class="a" style="left:674.95px;top:584px;width:300px;text-align:right;color:#2020e8;letter-spacing:0.45px">Clean</div>
<div class="a" style="left:284px;top:598px;color:#141478">特征:</div>
<div class="a" style="left:494px;top:598px;color:#2020e8;letter-spacing:0.29px">has_journal,ext_attr,resize_inode,dir_index,filetype,extents,flex_bg,sparse_super,huge_file,extra_isize</div>
<div class="a" style="left:284px;top:612px;color:#141478">卷UUID:</div>
<div class="a" style="left:494px;top:612px;color:#2020e8;letter-spacing:0.14px">5F055C4D-1E1A-4880-A595-A06F04EC5CE4</div>
<div class="a" style="left:284px;top:626px;color:#141478">加载点:</div>
<div class="a" style="left:494px;top:626px;color:#2020e8;letter-spacing:0px">/</div>
<div class="ab" style="left:285px;top:653px;width:98px;height:19px;border:1px solid #d0d0d0;border-radius:3px;background:#fdfdfd"></div>
<div class="a" style="left:285px;top:656px;width:98px;text-align:center;color:#000">分析</div>
<div class="a" style="left:389px;top:658px;color:#141478">数据分配情况图:</div>
<div class="ab" style="left:279px;top:891px;width:933px;height:1px;background:#e0e0e0"></div>
<div class="ab" style="left:279px;top:892px;width:933px;height:1px;background:#fff"></div>
<div class="ab" style="left:1px;top:893px;width:1211px;height:1px;background:#d8d8d8"></div>
<div class="ab" style="left:1211px;top:214px;width:1px;height:678px;background:#e0e0e0"></div>
<div class="ab" style="left:1212px;top:214px;width:1px;height:679px;background:#fff"></div>
<!-- status -->
<div class="a" style="left:3px;top:897px;color:#000">就绪</div>
<div class="ab" style="left:1107px;top:896px;width:1px;height:15px;background:#d0d0d0"></div>
<div class="ab" style="left:1150px;top:896px;width:1px;height:15px;background:#d0d0d0"></div>
<div class="ab" style="left:1193px;top:896px;width:1px;height:15px;background:#d0d0d0"></div>
<div class="a" style="left:1113px;top:897px;color:#000">大写</div>
<div class="a" style="left:1155px;top:897px;color:#000">数字</div>
<svg style="left:1201px;top:900px" width="11" height="11"><g fill="#b0b0b0"><rect x="8" y="2" width="2" height="2"/><rect x="5" y="5" width="2" height="2"/><rect x="8" y="5" width="2" height="2"/><rect x="2" y="8" width="2" height="2"/><rect x="5" y="8" width="2" height="2"/><rect x="8" y="8" width="2" height="2"/></g></svg>
<svg style="left:0;top:0" width="1214" height="913"><path d="M267.2 367.3 L284.7 353.2 L285.6 359 L498 331.8 L287.4 370.8 L287.9 376.2 Z" fill="#fd4f66"/></svg>
<!-- window edges -->
<div class="ab" style="left:0;top:8px;width:1px;height:22px;background:#a29cb8"></div>
<div class="ab" style="left:0;top:30px;width:1px;height:7px;background:#c4b9a9"></div>
<div class="ab" style="left:0;top:37px;width:1px;height:876px;background:#2e2e2e"></div>
<div class="ab" style="left:1213px;top:8px;width:1px;height:16px;background:#c0b0a0"></div>
<div class="ab" style="left:1213px;top:24px;width:1px;height:13px;background:#a8a0c0"></div>
<div class="ab" style="left:1213px;top:37px;width:1px;height:876px;background:#2e2e2e"></div>
<div class="ab" style="left:0;top:911px;width:1214px;height:2px;background:#2a2a2a"></div>
<svg style="left:0;top:903px" width="10" height="10"><path d="M0 0 L1 0 Q1 9 9 9 L10 10 L0 10 Z" fill="#2a2a2a"/></svg>
<svg style="left:1204px;top:903px" width="10" height="10"><path d="M10 0 L9 0 Q9 9 1 9 L0 10 L10 10 Z" fill="#2a2a2a"/></svg>
</body></html>
